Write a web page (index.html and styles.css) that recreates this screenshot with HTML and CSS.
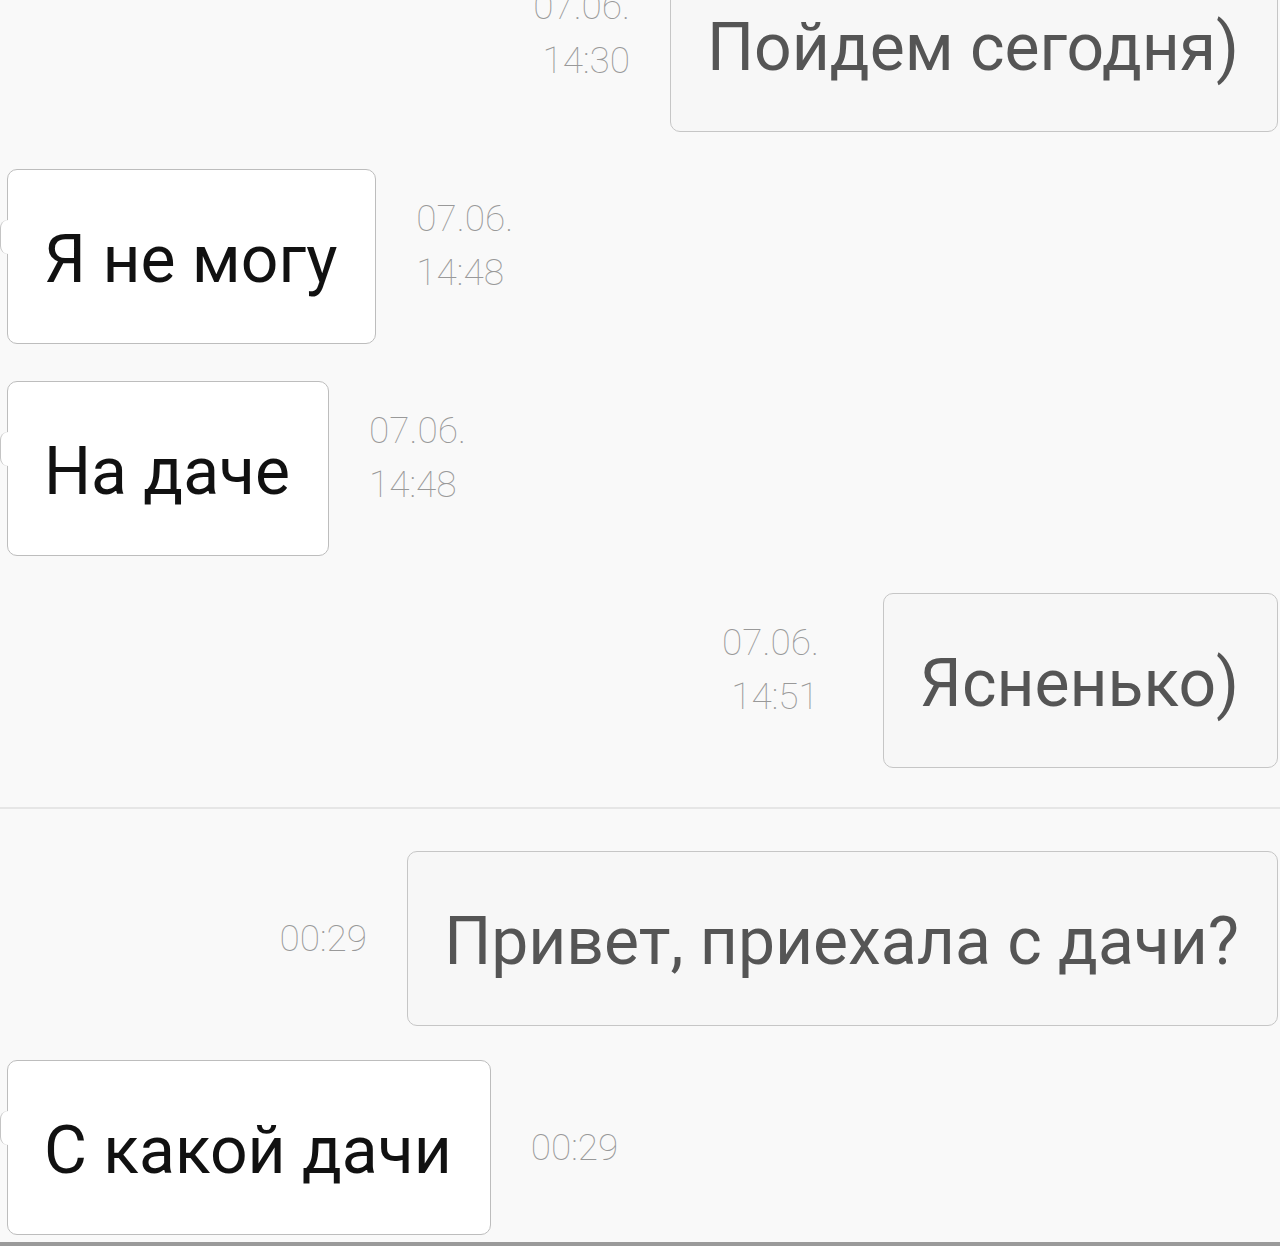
FILE: index.html
```html
<!DOCTYPE html>
<html lang="ru">
<head>
    <meta charset="UTF-8">
    <meta name="viewport" content="width=device-width, initial-scale=1.0">
    <title>Чат</title>
    <link rel="stylesheet" href="styles.css">
</head>
<body>
    <div class="chat">
        <div class="msg out first">
            <div class="time two"><span>07.06.</span><span>14:30</span></div>
            <div class="bubble">Пойдем сегодня)</div>
        </div>
        <div class="msg in">
            <div class="bubble">Я не могу</div>
            <div class="time two"><span>07.06.</span><span>14:48</span></div>
        </div>
        <div class="msg in">
            <div class="bubble">На даче</div>
            <div class="time two"><span>07.06.</span><span>14:48</span></div>
        </div>
        <div class="msg out wide">
            <div class="time two"><span>07.06.</span><span>14:51</span></div>
            <div class="bubble">Ясненько)</div>
        </div>

        <div class="divider"></div>

        <div class="msg out">
            <div class="time"><span>00:29</span></div>
            <div class="bubble">Привет, приехала с дачи?</div>
        </div>
        <div class="msg in last">
            <div class="bubble">С какой дачи</div>
            <div class="time"><span>00:29</span></div>
        </div>
    </div>
    <div class="bottom-bar"></div>
</body>
</html>
```

FILE: styles.css
```css
html, body {
    margin: 0;
    padding: 0;
    background: #f9f9f9;
}
body {
    font-family: Roboto, "Noto Sans", Arial, sans-serif;
    height: 1246px;
    overflow: hidden;
    display: flex;
    flex-direction: column;
}
.chat {
    flex: 1;
    display: flex;
    flex-direction: column;
}
.msg {
    display: flex;
    align-items: center;
    gap: 40px;
    margin-top: 37px;
}
.msg.first {
    margin-top: -43px;
}
.msg.last {
    margin-top: 34px;
}
.msg.in {
    justify-content: flex-start;
    padding-left: 7px;
}
.msg.out {
    justify-content: flex-end;
    padding-right: 2px;
}
.msg.wide {
    gap: 64px;
}
.bubble {
    position: relative;
    box-sizing: border-box;
    height: 175px;
    display: flex;
    align-items: center;
    padding: 6px 38px 0 36px;
    border-radius: 10px;
    font-size: 66px;
    white-space: nowrap;
}
.msg.in .bubble {
    background: #ffffff;
    border: 1.5px solid #bdbdbd;
    color: #111111;
}
.msg.in .bubble::before {
    content: "";
    position: absolute;
    left: -8px;
    top: 50px;
    width: 12px;
    height: 34px;
    background: #ffffff;
    border-left: 1.5px solid #c4c4c4;
    border-radius: 8px 0 0 8px;
}
.msg.out .bubble {
    background: #f7f7f7;
    border: 1.5px solid #c6c6c6;
    color: #555555;
}
.time {
    display: flex;
    flex-direction: column;
    font-size: 37px;
    font-weight: 100;
    line-height: 54px;
    color: #999999;
}
.time.two {
    margin-bottom: 22px;
}
.msg.out .time {
    align-items: flex-end;
}
.msg.in .time {
    align-items: flex-start;
}
.divider {
    height: 2px;
    background: #e6e6e6;
    margin-top: 39px;
    margin-bottom: 5px;
}
.bottom-bar {
    height: 4px;
    background: #9a9a9a;
}
```
